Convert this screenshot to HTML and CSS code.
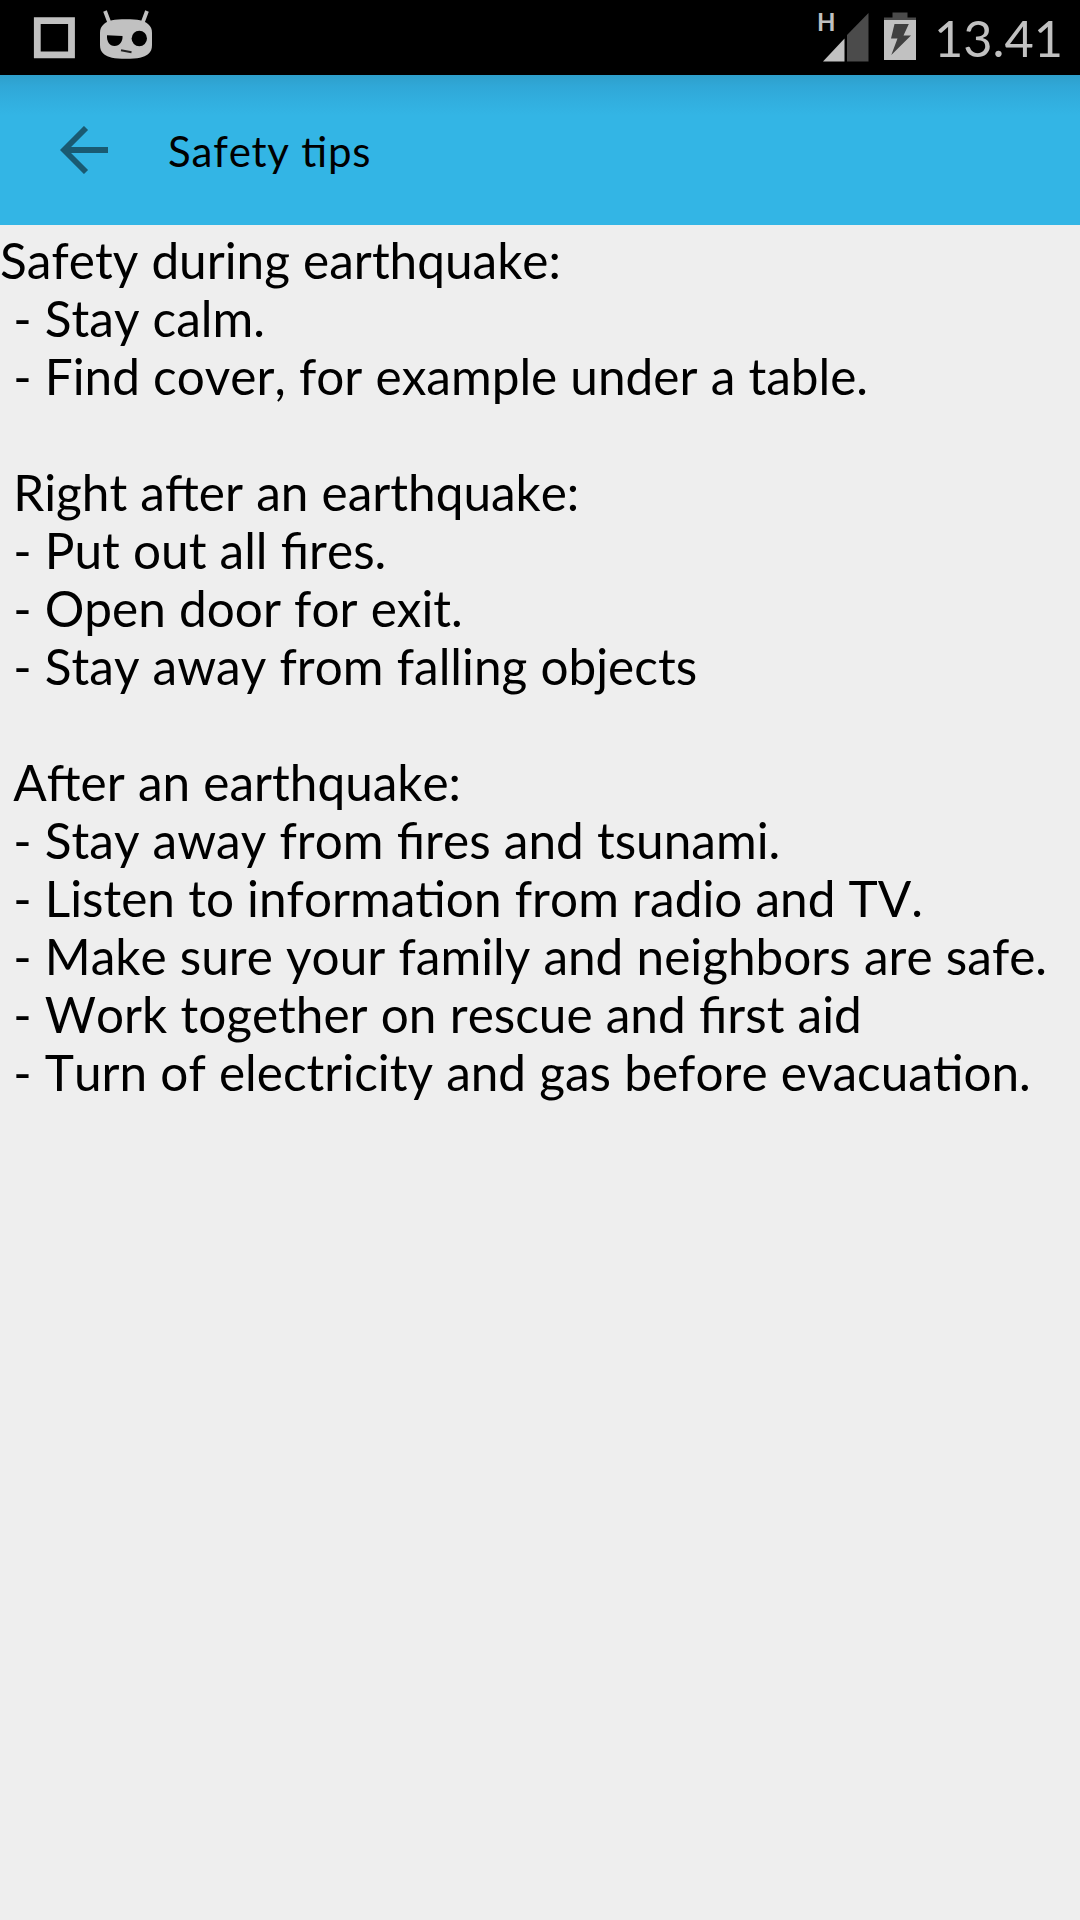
FILE: index.html
```html
<!DOCTYPE html>
<html lang="en">
<head>
<meta charset="utf-8">
<title>Safety tips</title>
<link rel="stylesheet" href="styles.css">
</head>
<body>
<div class="status-bar">
  <svg class="status-left" width="160" height="75" viewBox="0 0 160 75">
    <path d="M37.3 20.7h34.2v34.2H37.3z" fill="none" stroke="#c1c1c1" stroke-width="6.8"/>
    <path d="M105 11l4.500 12M147 11l-4.500 12" fill="none" stroke="#c1c1c1" stroke-width="3.800"/>
    <path d="M126 19.300c12 0 18 1.200 22 4.700 3 2.600 4 5 4 9v12c0 4-1 6.800-4 9.300-4 3.200-10 4.500-22 4.500s-18-1.300-22-4.500c-3-2.500-4-5.300-4-9.300V33c0-4 1-6.400 4-9 4-3.500 10-4.700 22-4.700z" fill="#c1c1c1"/>
    <path d="M107 35.300l15.500.8c.5 5.500-3 9.900-8 9.900s-8-4.500-7.500-10.700z"/>
    <circle cx="139.300" cy="38.500" r="7.700"/>
    <path d="M121 50.300l10.500 2" stroke="#222" stroke-width="1.900"/>
  </svg>
  <div class="status-right">
    <span class="network">H</span>
    <svg class="signal" width="103" height="75" viewBox="823 0 103 75">
      <path d="M868.500 13v48.500H847V35z" fill="#4b4b4b"/>
      <path d="M844.500 38.500v23H823z" fill="#c1c1c1"/>
      <path d="M892.500 12.500h15v5H916V20h-32v-2.500h8.500z" fill="#4b4b4b"/>
      <path d="M884 20h32v40h-32z" fill="#c1c1c1"/>
      <path d="M894.500 24h14.300l-5.300 11.500h7.500L891.300 55l6.200-16.500H891z" fill="#404040"/>
    </svg>
    <span class="clock">13.41</span>
  </div>
</div>
<header class="app-bar">
  <svg class="back" width="48" height="48" viewBox="0 0 48 48">
    <path d="M26 2L4 24l22 22M4 24h44" fill="none" stroke="#1a5a72" stroke-width="5.800"/>
  </svg>
  <h1 class="title">Safety tips</h1>
</header>
<main class="tips">Safety during earthquake:
 - Stay calm.
 - Find cover, for example under a table.

 Right after an earthquake:
 - Put out all fires.
 - Open door for exit.
 - Stay away from falling objects

 After an earthquake:
 - Stay away from fires and tsunami.
 - Listen to information from radio and TV.
 - Make sure your family and neighbors are safe.
 - Work together on rescue and first aid
 - Turn of electricity and gas before evacuation.</main>
</body>
</html>
```

FILE: styles.css
```css
body {
  margin: 0;
  min-height: 1920px;
  background: #eee;
  color: #000;
  font-family: Lato, Carlito, sans-serif;
  font-kerning: none;
}
.status-bar {
  display: flex;
  height: 75px;
  background: #000;
  color: #c1c1c1;
}
.status-right {
  display: flex;
  margin-left: 657px;
}
.network {
  width: 6px;
  padding-top: 9px;
  font-size: 24px;
  font-weight: 700;
  line-height: 26px;
}
.signal {
  flex: none;
}
.clock {
  padding-left: 8px;
  font-size: 50.5px;
  line-height: 75px;
}
.app-bar {
  display: flex;
  align-items: center;
  gap: 60px;
  height: 150px;
  padding-left: 60px;
  background: linear-gradient(#2e9fcb 0, #30a8d8 12px, #33b5e5 40px);
}
.title {
  margin: 0;
  padding-top: 2px;
  font-size: 42px;
  font-weight: 400;
  line-height: 60px;
  letter-spacing: 0.75px;
  font-feature-settings: "liga" 1;
}
.tips {
  padding-top: 6px;
  white-space: pre;
  font-size: 49.5px;
  line-height: 58px;
  word-spacing: 0.5px;
}
```
